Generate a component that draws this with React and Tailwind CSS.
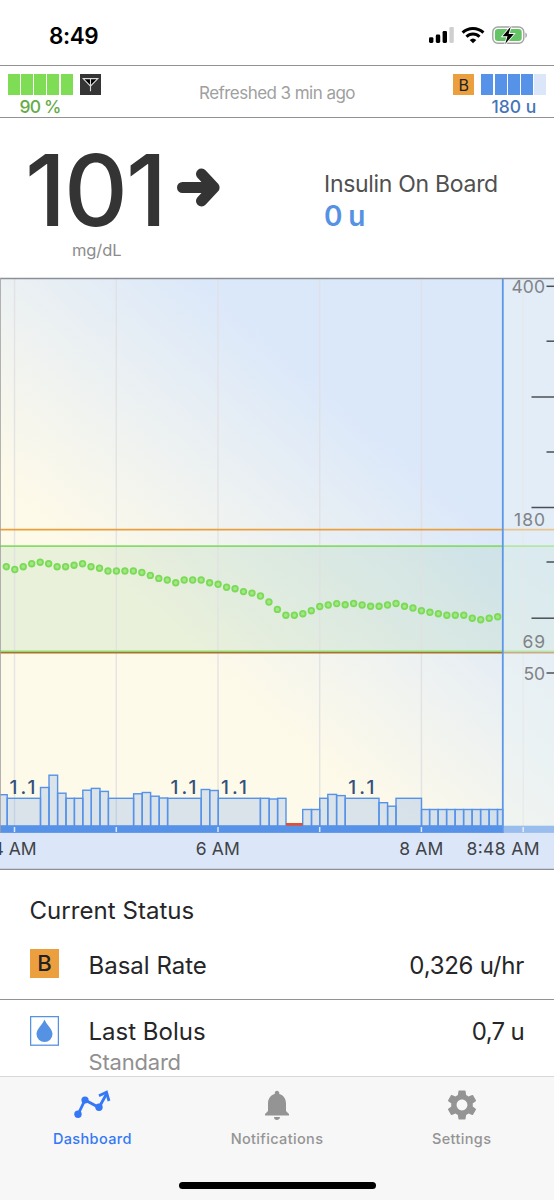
import React from 'react';
import { MdNotifications, MdSettings } from 'react-icons/md';

const HOUR_LINES = [14.5, 116.3, 218, 319.7, 421.4, 523.2];

const LONG_TICKS = [397, 507.5, 618.2];
const SHORT_TICKS = [286.3, 341.2, 452, 562, 673];

// one reading every 5 minutes
const READINGS = [
  566.7, 569.5, 566.7, 563.7, 562.2, 563.7, 566.7, 566.7, 565.2, 563.7, 566.7, 568.2, 571, 571, 571,
  571, 572.5, 575.4, 578.4, 580, 582.8, 580, 580, 580, 582.8, 584.3, 587.2, 588.7, 591.6, 593.1, 596,
  602, 609.4, 615.2, 615.2, 613.7, 610.7, 606.5, 605, 603.6, 604.8, 603.5, 605, 606.3, 606.3, 605,
  603.5, 606.3, 608, 610.7, 612.3, 613.7, 615.2, 615.2, 615.2, 618.2, 619.7, 618.2, 616.8,
];

// [start x, end x, top y]
const BASAL_BARS = [
  [-4, 7.2, 794.7], [7.2, 40.5, 798.3], [40.5, 49, 787.5], [49, 57.6, 775.2], [57.6, 66, 793.2],
  [66, 74.4, 798.3], [74.4, 82.8, 798.3], [82.8, 91.3, 790.2], [91.3, 100, 788.4], [100, 108.4, 791.4],
  [108.4, 133.6, 798.3], [133.6, 142.2, 793.8], [142.2, 150.6, 792.5], [150.6, 159.2, 796.2],
  [159.2, 167.6, 798], [167.6, 201.2, 798.3], [201.2, 209.7, 789.5], [209.7, 218.3, 790.5],
  [218.3, 260.4, 798.3], [260.4, 269.2, 798.3], [269.2, 277.6, 799], [277.6, 286, 798.3],
  [302.7, 311.5, 809.5], [311.5, 319.7, 809.5], [319.7, 327.8, 798.3], [327.8, 336.6, 794.4],
  [336.6, 345.2, 795.6], [345.2, 379, 798.3], [379, 387.6, 802.7], [387.6, 396, 806.2],
  [396, 421.5, 798.3], [421.5, 429.6, 809.5], [429.6, 438.1, 809.5], [438.1, 446.6, 809.5],
  [446.6, 455.1, 809.5], [455.1, 463.6, 809.5], [463.6, 472.1, 809.5], [472.1, 480.6, 809.5],
  [480.6, 489.1, 809.5], [489.1, 497.5, 809.5], [497.5, 503, 809.5],
];

const SignalIcon = () => (
  <svg width="25" height="17" viewBox="0 0 25 17">
    <rect x="0" y="11.3" width="4.4" height="5.6" rx="1.3" />
    <rect x="6.8" y="8.6" width="4.4" height="8.3" rx="1.3" />
    <rect x="13.6" y="5" width="4.4" height="11.9" rx="1.3" />
    <rect x="20.4" y="1" width="4.4" height="15.9" rx="1.3" fill="#cfcfcf" />
  </svg>
);

const WifiIcon = () => (
  <svg width="24" height="18" viewBox="0 0 24 18" fill="none" stroke="#000" strokeWidth="3">
    <path d="M1.6 6.6a15 15 0 0 1 20.8 0" />
    <path d="M5.5 10.8a9.2 9.2 0 0 1 13 0" />
    <path d="M8.7 14a4.8 4.8 0 0 1 6.6 0L12 17.3z" fill="#000" stroke="none" />
  </svg>
);

const BatteryIcon = () => (
  <svg width="36" height="19" viewBox="0 0 36 19">
    <rect x="0.8" y="1" width="31" height="16.2" rx="5" fill="none" stroke="#a3a3a3" strokeWidth="1.4" />
    <rect x="2.9" y="3.1" width="26.8" height="12" rx="3" fill="#65c466" />
    <path d="M33.4 6.5c2 .8 2 4.6 0 5.4z" fill="#a3a3a3" />
    <path
      d="M18.8 0.6 10.6 10.3h4.9L13.2 17.9l8.6-10h-5.2z"
      fill="#000"
      stroke="#fff"
      strokeWidth="1.8"
      paintOrder="stroke"
    />
  </svg>
);

const StatusBar = () => (
  <div className="flex h-[65px] items-start justify-between pl-[49px] pr-[26px]">
    <span className="mt-[22px] text-[22.5px] leading-7 font-semibold text-black tracking-[-0.4px]">8:49</span>
    <div className="mt-[26px] flex">
      <SignalIcon />
      <div className="ml-[7px]"><WifiIcon /></div>
      <div className="ml-[7px]"><BatteryIcon /></div>
    </div>
  </div>
);

const Segments = ({ colors }) => (
  <div className="flex h-[21px] gap-[1.3px]">
    {colors.map((color, index) => (
      <div key={index} className={`w-[12px] ${color}`} />
    ))}
  </div>
);

const PumpBar = () => (
  <div className="flex h-[53px] justify-between border-y-[1.5px] border-[#929292] pl-[7.5px] pr-[7.5px] pt-[8px]">
    <div className="flex items-start gap-[7px]">
      <div className="text-center">
        <Segments colors={['bg-[#7fdd55]', 'bg-[#7fdd55]', 'bg-[#7fdd55]', 'bg-[#7fdd55]', 'bg-[#7fdd55]']} />
        <p className="mt-[2px] text-[17.5px] leading-5 font-medium text-[#65ac49] tracking-[-0.8px]">90 %</p>
      </div>
      <svg width="21" height="21" viewBox="0 0 21 21">
        <rect width="21" height="21" fill="#353535" />
        <path d="M3.2 4.6h14.6l-7.3 7.6z" fill="#000" />
        <path d="M3.2 4.6h14.6l-7.3 7.6zM10.5 4.6v12.6" fill="none" stroke="#ddd" strokeWidth="1.1" />
      </svg>
    </div>
    <p className="mt-[7px] text-[17px] leading-6 text-[#a0a0a0] tracking-[-0.55px]">Refreshed 3 min ago</p>
    <div className="flex items-start gap-[7px]">
      <div className="flex h-[21px] w-[21px] items-center justify-center bg-[#ec9f3e] text-[16px] text-[#222]">B</div>
      <div className="text-center">
        <Segments colors={['bg-[#5692e8]', 'bg-[#5692e8]', 'bg-[#5692e8]', 'bg-[#5692e8]', 'bg-[#dbe7f8]']} />
        <p className="mt-[2px] text-[17.5px] leading-5 font-medium text-[#4475b8]">180 u</p>
      </div>
    </div>
  </div>
);

const Readout = () => (
  <div className="flex h-[160px]">
    <div className="w-[324px]">
      <div className="flex pl-[25px] pt-[22px]">
        <span className="w-[152px] text-[99px] leading-[100px] font-medium text-[#343434] tracking-[-2px]">101</span>
        <svg className="mt-[27px]" width="44" height="42" viewBox="0 0 44 42" fill="none" stroke="#343434" strokeWidth="11" strokeLinecap="round" strokeLinejoin="round">
          <path d="M5.500 20.500h31M24.500 7l12.600 13.500L24.500 34" />
        </svg>
      </div>
      <p className="pl-[72px] text-[16.5px] leading-5 text-[#8c8c8c] tracking-[-0.1px]">mg/dL</p>
    </div>
    <div className="pt-[50px]">
      <p className="text-[23px] leading-8 text-[#505050] tracking-[-0.3px]">Insulin On Board</p>
      <p className="text-[28px] leading-8 font-semibold text-[#5692e3] tracking-[-0.7px]">0 u</p>
    </div>
  </div>
);

const GlucoseChart = () => (
  <svg className="block h-[592px] w-[554px] shrink-0 overflow-visible" viewBox="0 278 554 592">
    <defs>
      <linearGradient id="sky" gradientUnits="userSpaceOnUse" x1="-103" y1="395" x2="89" y2="176.5">
        <stop offset="0" stopColor="#fefae9" />
        <stop offset="1" stopColor="#dbe8fa" />
      </linearGradient>
    </defs>
    <rect x="0" y="278" width="554" height="592" fill="url(#sky)" />
    <rect x="0" y="546" width="554" height="106" fill="#8fc79b" fillOpacity="0.18" />

    {HOUR_LINES.map((x) => (
      <line key={x} x1={x} x2={x} y1="278" y2="826" stroke="#e0dfe2" strokeOpacity="0.85" strokeWidth="1.4" />
    ))}

    <line x1="0" x2="554" y1="529.6" y2="529.6" stroke="#ea9f3f" strokeWidth="1.8" />
    <line x1="0" x2="554" y1="546.2" y2="546.2" stroke="#86dc68" strokeWidth="1.7" />
    <line x1="0" x2="554" y1="651.2" y2="651.2" stroke="#96d86c" strokeWidth="1.4" />
    <line x1="0" x2="554" y1="652.7" y2="652.7" stroke="#a8722f" strokeWidth="1.5" />

    {READINGS.map((y, index) => (
      <circle key={index} cx={6.3 + index * 8.472} cy={y} r="2.8" fill="#9fe883" stroke="#7dda58" strokeWidth="1.8" />
    ))}

    {BASAL_BARS.map(([start, end, top]) => (
      <rect key={start} x={start} y={top} width={end - start} height={826 - top} fill="#5692e8" fillOpacity="0.22" stroke="#5692e8" strokeWidth="1.4" />
    ))}
    <rect x="286" y="823" width="16.7" height="3" fill="#e04f38" />
    <rect x="0" y="825.7" width="554" height="7.2" fill="#5692e8" />
    {HOUR_LINES.map((x) => (
      <line key={x} x1={x} x2={x} y1="827" y2="832" stroke="#dbe9f8" strokeWidth="1.5" />
    ))}
    <rect x="503" y="279" width="51" height="554" fill="#ecf4f5" fillOpacity="0.45" />
    <line x1="502.8" x2="502.8" y1="279" y2="833" stroke="#5c97e8" strokeWidth="1.8" />
    <rect x="0" y="833" width="554" height="36" fill="#dbe7f8" />

    <g fontSize="19" fontWeight="500" fill="#34507d">
      <text x="9.5" y="793.7" textLength="26">1.1</text>
      <text x="170.5" y="793.7" textLength="26">1.1</text>
      <text x="221" y="793.7" textLength="26">1.1</text>
      <text x="348.3" y="793.7" textLength="26">1.1</text>
    </g>

    <g fontSize="17.5" fill="#808387" textAnchor="end">
      <text x="545" y="293.2" textLength="33.5">400</text>
      <text x="545" y="525.7" textLength="31">180</text>
      <text x="545" y="648.3" textLength="22.5">69</text>
      <text x="545" y="679.6" textLength="21.5">50</text>
    </g>
    <g stroke="#4b4f55" strokeWidth="1.5">
      {LONG_TICKS.map((y) => (
        <line key={y} x1="531.5" x2="554" y1={y} y2={y} />
      ))}
      {SHORT_TICKS.map((y) => (
        <line key={y} x1="546.5" x2="554" y1={y} y2={y} />
      ))}
    </g>

    <g fontSize="17.5" fill="#404246" textAnchor="middle">
      <text x="14.5" y="855.3" textLength="44">4 AM</text>
      <text x="217.8" y="855.3" textLength="44">6 AM</text>
      <text x="421.3" y="855.3" textLength="44">8 AM</text>
      <text x="503" y="855.3" textLength="73">8:48 AM</text>
    </g>

    <line x1="0" x2="554" y1="278.5" y2="278.5" stroke="#8c9096" strokeWidth="1.3" />
    <line x1="0" x2="554" y1="869.4" y2="869.4" stroke="#8c9096" strokeWidth="1.3" />
    <line x1="0.4" x2="0.4" y1="278" y2="833" stroke="#a0a0a0" strokeWidth="0.9" />
  </svg>
);

const CurrentStatus = () => (
  <div className="h-[206px] overflow-hidden text-[24px] text-[#262628]">
    <h2 className="ml-[29.5px] mt-[25px] text-[24px] leading-8 tracking-[0.05px]">Current Status</h2>
    <div className="mt-[14px] flex h-[59px] items-start border-b-[1.5px] border-[#929292] pl-[30px] pr-[30px]">
      <div className="mt-[8px] flex h-[29px] w-[29px] items-center justify-center bg-[#ec9f3e] text-[22px] font-medium text-[#222]">B</div>
      <span className="ml-[29.5px] mt-[9px] leading-8">Basal Rate</span>
      <span className="ml-auto mt-[9px] leading-8 tracking-[-0.25px]">0,326 u/hr</span>
    </div>
    <div className="flex items-start pl-[30px] pr-[30px]">
      <svg className="mt-[16px]" width="29" height="30" viewBox="0 0 29 30">
        <rect x="0.6" y="0.6" width="27.8" height="28.6" fill="#fff" stroke="#5692e3" strokeWidth="1.3" />
        <path d="M14.5 3.6c1.8 5 8 9.500 8 14.500a8 8 0 0 1-16 0c0-5 6.200-9.500 8-14.500z" fill="#5692e3" />
      </svg>
      <div className="ml-[29.5px] mt-[16px]">
        <p className="leading-8">Last Bolus</p>
        <p className="text-[22px] leading-[29px] text-[#909090] tracking-[-0.2px]">Standard</p>
      </div>
      <span className="ml-auto mt-[16px] leading-8 tracking-[-0.7px]">0,7 u</span>
    </div>
  </div>
);

const DashboardIcon = () => (
  <svg width="38" height="36" viewBox="0 0 38 36" fill="none" stroke="#3478f6" strokeWidth="2.8">
    <path d="M5 27.500 12 13l14 7.500L34 6" />
    <path d="M26 8.700 33.500 5.300 36 14" />
    <g fill="#3478f6" stroke="none">
      <circle cx="5" cy="27.300" r="3.700" />
      <circle cx="12" cy="13" r="3.600" />
      <circle cx="26" cy="20.300" r="3.700" />
    </g>
  </svg>
);

const TabBar = () => (
  <nav className="flex h-[124px] flex-col items-center border-t border-[#d8d8d8] bg-[#f7f7f7]">
    <div className="grid w-full grid-cols-3 text-center text-[14.5px] leading-5 font-medium text-[#949494] tracking-[0.35px]">
      <div className="flex flex-col items-center pt-[10px] text-[#3478f6]">
        <DashboardIcon />
        <span className="mt-[6px]">Dashboard</span>
      </div>
      <div className="flex flex-col items-center pt-[10px]">
        <MdNotifications size={36} />
        <span className="mt-[6px]">Notifications</span>
      </div>
      <div className="flex flex-col items-center pt-[10px]">
        <MdSettings size={36} />
        <span className="mt-[6px]">Settings</span>
      </div>
    </div>
    <div className="mt-auto mb-[11px] h-[7px] w-[197px] rounded-full bg-black" />
  </nav>
);

const App = () => {
  return (
    <div className="flex h-[1200px] w-[554px] flex-col overflow-hidden bg-white font-['Inter','Liberation_Sans',sans-serif]">
      <StatusBar />
      <PumpBar />
      <Readout />
      <GlucoseChart />
      <CurrentStatus />
      <TabBar />
    </div>
  );
};

export default App;
